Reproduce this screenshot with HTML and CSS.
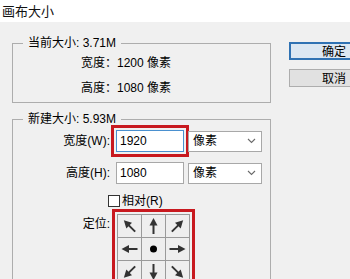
FILE: index.html
```html
<!DOCTYPE html>
<html lang="zh-CN">
<head>
<meta charset="utf-8">
<title>画布大小</title>
<link rel="stylesheet" href="styles.css">
</head>
<body>
<div class="titlebar">画布大小</div>
<div class="dialog">
  <div class="main">
    <fieldset class="group group-current">
      <legend>当前大小: 3.71M</legend>
      <div class="info">
        <div class="info-row">宽度：1200 像素</div>
        <div class="info-row">高度：1080 像素</div>
      </div>
    </fieldset>
    <fieldset class="group group-new">
      <legend>新建大小: 5.93M</legend>
      <div class="form">
        <div class="row">
          <span class="label">宽度(W):</span>
          <span class="input input-focus highlight">1920</span>
          <span class="select"><span>像素</span><svg class="chev" width="9" height="6" viewBox="0 0 9 6"><path d="M1 1 L4.5 4.5 L8 1" fill="none" stroke="#6a6a6a" stroke-width="1.1"/></svg></span>
        </div>
        <div class="row row-h">
          <span class="label">高度(H):</span>
          <span class="input">1080</span>
          <span class="select"><span>像素</span><svg class="chev" width="9" height="6" viewBox="0 0 9 6"><path d="M1 1 L4.5 4.5 L8 1" fill="none" stroke="#6a6a6a" stroke-width="1.1"/></svg></span>
        </div>
        <div class="row row-check">
          <span class="checkbox"></span><span>相对(R)</span>
        </div>
        <div class="row row-anchor">
          <span class="label">定位:</span>
          <div class="anchor-frame">
            <div class="anchor">
              <div class="cell"><svg width="23" height="22" viewBox="0 0 23 22"><g transform="rotate(-45 11.5 11)"><rect x="10.5" y="9" width="2" height="10" fill="#333"/><path d="M11.5 3 L7.5 10.5 L15.5 10.5 Z" fill="#333"/></g></svg></div>
              <div class="cell"><svg width="23" height="22" viewBox="0 0 23 22"><g><rect x="10.5" y="9" width="2" height="10" fill="#333"/><path d="M11.5 3 L7.5 10.5 L15.5 10.5 Z" fill="#333"/></g></svg></div>
              <div class="cell"><svg width="23" height="22" viewBox="0 0 23 22"><g transform="rotate(45 11.5 11)"><rect x="10.5" y="9" width="2" height="10" fill="#333"/><path d="M11.5 3 L7.5 10.5 L15.5 10.5 Z" fill="#333"/></g></svg></div>
              <div class="cell"><svg width="23" height="22" viewBox="0 0 23 22"><g transform="rotate(-90 11.5 11)"><rect x="10.5" y="9" width="2" height="10" fill="#333"/><path d="M11.5 3 L7.5 10.5 L15.5 10.5 Z" fill="#333"/></g></svg></div>
              <div class="cell"><svg width="23" height="22" viewBox="0 0 23 22"><circle cx="11.5" cy="11" r="3.5" fill="#000"/></svg></div>
              <div class="cell"><svg width="23" height="22" viewBox="0 0 23 22"><g transform="rotate(90 11.5 11)"><rect x="10.5" y="9" width="2" height="10" fill="#333"/><path d="M11.5 3 L7.5 10.5 L15.5 10.5 Z" fill="#333"/></g></svg></div>
              <div class="cell"><svg width="23" height="22" viewBox="0 0 23 22"><g transform="rotate(-135 11.5 11)"><rect x="10.5" y="9" width="2" height="10" fill="#333"/><path d="M11.5 3 L7.5 10.5 L15.5 10.5 Z" fill="#333"/></g></svg></div>
              <div class="cell"><svg width="23" height="22" viewBox="0 0 23 22"><g transform="rotate(180 11.5 11)"><rect x="10.5" y="9" width="2" height="10" fill="#333"/><path d="M11.5 3 L7.5 10.5 L15.5 10.5 Z" fill="#333"/></g></svg></div>
              <div class="cell"><svg width="23" height="22" viewBox="0 0 23 22"><g transform="rotate(135 11.5 11)"><rect x="10.5" y="9" width="2" height="10" fill="#333"/><path d="M11.5 3 L7.5 10.5 L15.5 10.5 Z" fill="#333"/></g></svg></div>
            </div>
          </div>
        </div>
      </div>
    </fieldset>
  </div>
  <div class="actions">
    <button class="btn btn-default">确定</button>
    <button class="btn">取消</button>
  </div>
</div>
</body>
</html>
```
FILE: styles.css
```css
html, body {
  margin: 0;
  padding: 0;
  width: 350px;
  height: 279px;
  overflow: hidden;
  background: #f0f0f0;
}
body {
  font-family: "Liberation Sans", "Noto Sans CJK SC", sans-serif;
  font-size: 12px;
  line-height: 16px;
  color: #000;
}
.titlebar {
  height: 22px;
  line-height: 22px;
  background: #fff;
  padding-left: 2px;
  font-size: 13px;
  color: #111;
  font-family: "Noto Sans CJK SC", sans-serif;
}
.dialog {
  display: flex;
  align-items: flex-start;
}
.main {
  width: 259px;
  margin-left: 12px;
  flex: none;
}
.group {
  margin: 0;
  padding: 0;
  border: 1px solid #adadad;
  min-width: 0;
}
.group legend {
  margin-left: 10px;
  padding: 0 5px;
  line-height: 16px;
}
.group-current {
  margin-top: 13px;
}
.info {
  padding: 4px 0 6px 68px;
  display: flex;
  flex-direction: column;
  gap: 9px;
}
.group-new {
  margin-top: 8px;
  height: 200px;
}
.form {
  padding-top: 3px;
  display: flex;
  flex-direction: column;
}
.row {
  display: flex;
  align-items: center;
}
.label {
  width: 97px;
  text-align: right;
  flex: none;
}
.input {
  box-sizing: border-box;
  margin-left: 6px;
  width: 68px;
  height: 22px;
  border: 1px solid #a8a8a8;
  background: #fff;
  padding-left: 3px;
  line-height: 20px;
  flex: none;
}
.input-focus {
  border-color: #4a90cf;
}
.highlight {
  outline: 3px solid #c8191f;
  outline-offset: 2px;
}
.select {
  box-sizing: border-box;
  margin-left: 4px;
  width: 74px;
  height: 21px;
  border: 1px solid #a8a8a8;
  background: #fff;
  display: flex;
  align-items: center;
  justify-content: space-between;
  padding: 0 5px 0 4px;
  flex: none;
}
.chev {
  display: block;
}
.row-h {
  margin-top: 10px;
}
.row-check {
  margin-top: 9px;
  padding-left: 95px;
}
.checkbox {
  box-sizing: border-box;
  width: 12px;
  height: 12px;
  border: 1px solid #333;
  background: #fff;
  margin-right: 2px;
}
.row-anchor {
  margin-top: 0;
  align-items: flex-start;
}
.row-anchor .label {
  margin-top: 7px;
}
.anchor-frame {
  margin-left: 2px;
  border: 3px solid #c8191f;
  padding: 2px;
  margin-top: 0;
}
.anchor {
  display: grid;
  grid-template-columns: repeat(3, 23px);
  grid-template-rows: repeat(3, 22px);
  gap: 1px;
  border: 1px solid #9a9a9a;
  background: #9a9a9a;
  width: max-content;
}
.cell {
  background: #eeeeee;
}
.cell svg {
  display: block;
}
.actions {
  margin-left: 18px;
  padding-top: 20px;
  display: flex;
  flex-direction: column;
  gap: 9px;
  flex: none;
}
.btn {
  box-sizing: border-box;
  width: 90px;
  height: 18px;
  padding: 0;
  font-family: "Noto Sans CJK SC", sans-serif;
  font-size: 12px;
  line-height: 14px;
  color: #000;
  background: #e1e1e1;
  border: 1px solid #adadad;
}
.btn-default {
  border: 2px solid #2f72b3;
  background: #dbe7f2;
}
```
